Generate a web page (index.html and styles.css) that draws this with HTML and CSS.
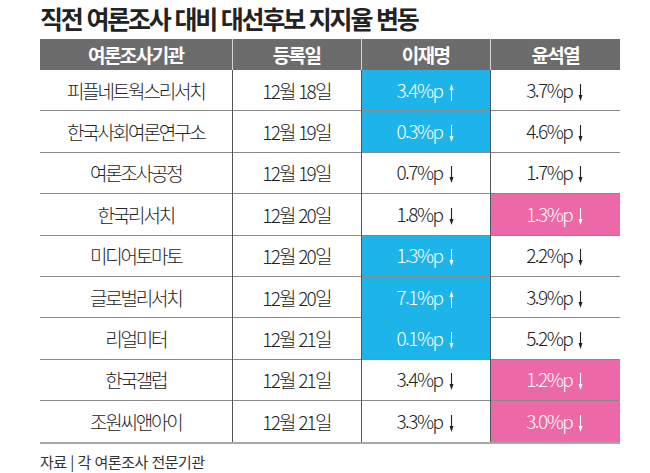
FILE: index.html
```html
<!DOCTYPE html>
<html lang="ko">
<head>
<meta charset="utf-8">
<title>직전 여론조사 대비 대선후보 지지율 변동</title>
<link rel="stylesheet" href="styles.css">
</head>
<body>
<div class="page">
  <h1 class="title">직전 여론조사 대비 대선후보 지지율 변동</h1>
  <table class="poll">
    <colgroup>
      <col class="c1"><col class="c2"><col class="c3"><col class="c4">
    </colgroup>
    <thead>
      <tr><th>여론조사기관</th><th>등록일</th><th>이재명</th><th>윤석열</th></tr>
    </thead>
    <tbody>
      <tr><td class="org">피플네트웍스리서치</td><td class="date">12월 18일</td><td class="num blue">3.4%p<svg class="arr" viewBox="0 0 7 17"><path d="M3.5 17V3"/><path class="hd" d="M1.5 6L3.5 0L5.5 6Z"/></svg></td><td class="num">3.7%p<svg class="arr" viewBox="0 0 7 17"><path d="M3.5 0V14"/><path class="hd" d="M1.5 11L3.5 17L5.5 11Z"/></svg></td></tr>
      <tr><td class="org">한국사회여론연구소</td><td class="date">12월 19일</td><td class="num blue">0.3%p<svg class="arr" viewBox="0 0 7 17"><path d="M3.5 0V14"/><path class="hd" d="M1.5 11L3.5 17L5.5 11Z"/></svg></td><td class="num">4.6%p<svg class="arr" viewBox="0 0 7 17"><path d="M3.5 0V14"/><path class="hd" d="M1.5 11L3.5 17L5.5 11Z"/></svg></td></tr>
      <tr><td class="org">여론조사공정</td><td class="date">12월 19일</td><td class="num">0.7%p<svg class="arr" viewBox="0 0 7 17"><path d="M3.5 0V14"/><path class="hd" d="M1.5 11L3.5 17L5.5 11Z"/></svg></td><td class="num">1.7%p<svg class="arr" viewBox="0 0 7 17"><path d="M3.5 0V14"/><path class="hd" d="M1.5 11L3.5 17L5.5 11Z"/></svg></td></tr>
      <tr><td class="org">한국리서치</td><td class="date">12월 20일</td><td class="num">1.8%p<svg class="arr" viewBox="0 0 7 17"><path d="M3.5 0V14"/><path class="hd" d="M1.5 11L3.5 17L5.5 11Z"/></svg></td><td class="num pink">1.3%p<svg class="arr" viewBox="0 0 7 17"><path d="M3.5 0V14"/><path class="hd" d="M1.5 11L3.5 17L5.5 11Z"/></svg></td></tr>
      <tr><td class="org">미디어토마토</td><td class="date">12월 20일</td><td class="num blue">1.3%p<svg class="arr" viewBox="0 0 7 17"><path d="M3.5 0V14"/><path class="hd" d="M1.5 11L3.5 17L5.5 11Z"/></svg></td><td class="num">2.2%p<svg class="arr" viewBox="0 0 7 17"><path d="M3.5 0V14"/><path class="hd" d="M1.5 11L3.5 17L5.5 11Z"/></svg></td></tr>
      <tr><td class="org">글로벌리서치</td><td class="date">12월 20일</td><td class="num blue">7.1%p<svg class="arr" viewBox="0 0 7 17"><path d="M3.5 17V3"/><path class="hd" d="M1.5 6L3.5 0L5.5 6Z"/></svg></td><td class="num">3.9%p<svg class="arr" viewBox="0 0 7 17"><path d="M3.5 0V14"/><path class="hd" d="M1.5 11L3.5 17L5.5 11Z"/></svg></td></tr>
      <tr><td class="org">리얼미터</td><td class="date">12월 21일</td><td class="num blue">0.1%p<svg class="arr" viewBox="0 0 7 17"><path d="M3.5 0V14"/><path class="hd" d="M1.5 11L3.5 17L5.5 11Z"/></svg></td><td class="num">5.2%p<svg class="arr" viewBox="0 0 7 17"><path d="M3.5 0V14"/><path class="hd" d="M1.5 11L3.5 17L5.5 11Z"/></svg></td></tr>
      <tr><td class="org">한국갤럽</td><td class="date">12월 21일</td><td class="num">3.4%p<svg class="arr" viewBox="0 0 7 17"><path d="M3.5 0V14"/><path class="hd" d="M1.5 11L3.5 17L5.5 11Z"/></svg></td><td class="num pink">1.2%p<svg class="arr" viewBox="0 0 7 17"><path d="M3.5 0V14"/><path class="hd" d="M1.5 11L3.5 17L5.5 11Z"/></svg></td></tr>
      <tr><td class="org">조원씨앤아이</td><td class="date">12월 21일</td><td class="num">3.3%p<svg class="arr" viewBox="0 0 7 17"><path d="M3.5 0V14"/><path class="hd" d="M1.5 11L3.5 17L5.5 11Z"/></svg></td><td class="num pink">3.0%p<svg class="arr" viewBox="0 0 7 17"><path d="M3.5 0V14"/><path class="hd" d="M1.5 11L3.5 17L5.5 11Z"/></svg></td></tr>
    </tbody>
  </table>
  <p class="source">자료 | 각 여론조사 전문기관</p>
</div>
</body>
</html>
```
FILE: styles.css
```css
html, body {
  margin: 0;
  padding: 0;
  background: #ffffff;
}
body {
  font-family: "Noto Sans CJK KR", "Noto Sans", sans-serif;
  color: #222222;
}
.page {
  width: 650px;
  height: 473px;
  padding-left: 40px;
  box-sizing: border-box;
}
.title {
  margin: 0;
  height: 39px;
  font-size: 25px;
  font-weight: 700;
  letter-spacing: -2.2px;
  line-height: 36px;
  color: #222222;
}
.poll {
  border-collapse: collapse;
  table-layout: fixed;
  width: 580px;
}
.c1 { width: 192px; }
.c2 { width: 129px; }
.c3 { width: 129px; }
.c4 { width: 130px; }
.poll th {
  height: 31px;
  padding: 0;
  background: #6c6c6c;
  color: #ffffff;
  font-size: 19px;
  font-weight: 700;
  letter-spacing: -1.6px;
  text-align: center;
  border-left: 1px solid #d4d4d4;
  line-height: 1;
}
.poll th:first-child { border-left: none; }
.poll td {
  height: 40.4px;
  padding: 0;
  text-align: center;
  border-top: 1px solid #8a8a8a;
  border-left: 1px solid #555555;
  line-height: 1;
  white-space: nowrap;
}
.poll td:first-child { border-left: none; }
.poll tbody tr:first-child td { border-top: none; }
.poll tbody tr:last-child td { border-bottom: 2px solid #a8a8a8; }
.org {
  font-size: 19px;
  font-weight: 300;
  letter-spacing: -2.2px;
}
.date {
  font-size: 19px;
  font-weight: 300;
  letter-spacing: -1.8px;
}
.num {
  font-size: 19px;
  font-weight: 300;
  letter-spacing: -1.5px;
}
.blue {
  background: #1db4ea;
  color: #ffffff;
}
.pink {
  background: #ec68a6;
  color: #ffffff;
}
.arr {
  width: 7px;
  height: 17px;
  margin-left: 5px;
  vertical-align: -3px;
}
.arr path {
  stroke: currentColor;
  stroke-width: 1.1;
  fill: none;
}
.arr .hd {
  stroke: none;
  fill: currentColor;
}
.source {
  margin: 10px 0 0 0;
  font-size: 15px;
  font-weight: 400;
  letter-spacing: -0.5px;
  color: #333333;
  line-height: 16px;
}
```
